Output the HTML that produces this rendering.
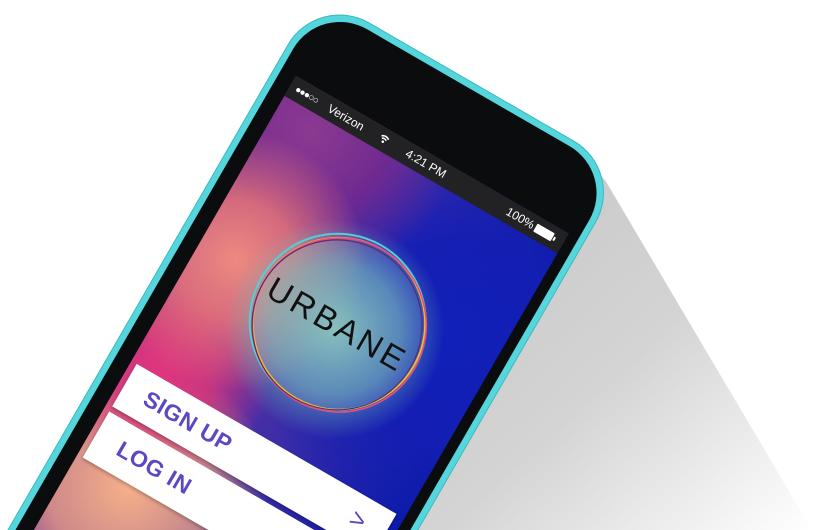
<!DOCTYPE html>
<html><head><meta charset="utf-8"><style>
html,body{margin:0;padding:0;width:818px;height:530px;overflow:hidden;background:#fff;font-family:"Liberation Sans",sans-serif}
#wrap{position:relative;width:818px;height:530px;overflow:hidden}
#shadow{position:absolute;left:0;top:0}
#f{position:absolute;left:296px;top:76px;width:0;height:0;transform:rotate(30deg);transform-origin:0 0}
.abs{position:absolute}
#phone{left:-23px;top:-83px;width:356px;height:640px;border-radius:60px 60px 0 0;background:#55d6dc;box-shadow:inset 0 0 0 1px #3fb8c0}
#bezel{left:-16px;top:-76px;width:342px;height:633px;border-radius:54px 54px 0 0;background:#0b0c0d}
#screen{left:0;top:0;width:315px;height:557px;overflow:hidden;
background:
radial-gradient(circle at 160px 200px,rgba(130,195,185,.95) 0,rgba(110,190,180,.6) 65px,rgba(110,190,180,0) 110px),
radial-gradient(circle at 40px 190px,#ee8a80 0,rgba(235,120,120,.8) 60px,rgba(235,120,120,0) 130px),
radial-gradient(circle at 30px 320px,#e0357f 0,rgba(220,50,120,.8) 50px,rgba(220,50,120,0) 110px),
radial-gradient(circle at 60px 440px,#f6b08a 0,rgba(245,170,130,.7) 80px,rgba(245,170,130,0) 140px),
radial-gradient(circle at 40px 40px,#8a3a90 0,rgba(120,40,140,.8) 80px,rgba(120,40,140,0) 150px),
radial-gradient(circle at 270px 150px,#1020b8 0,rgba(20,30,180,.9) 100px,rgba(20,30,180,0) 200px),
linear-gradient(90deg,#7a3a9a,#3a2ca8 55%,#0a1aa8)}
#sb{left:0;top:0;width:315px;height:23px;background:#222224;color:#fff;font-size:12px;line-height:23px}
#sb span{position:absolute;top:0}
.bar{left:6px;width:300px;background:#fff;color:#5b48c2;font-weight:bold;font-size:23px;letter-spacing:.5px;box-shadow:0 2px 3px rgba(0,0,0,.25)}
</style></head><body><div id="wrap">
<svg id="shadow" width="818" height="530">
<defs><linearGradient id="g" x1="0" y1="0" x2="1" y2="1"><stop offset="0" stop-color="#c4c4c4"/><stop offset=".55" stop-color="#d4d4d4"/><stop offset="1" stop-color="#fff"/></linearGradient></defs>
<polygon points="585,160 605,180 812,530 400,530" fill="url(#g)"/>
</svg>
<div id="f">
<div id="phone" class="abs"></div>
<div id="bezel" class="abs"></div>
<div id="screen" class="abs">
 <div id="sb" class="abs">
  <span style="left:6px;font-size:10px;letter-spacing:-1px">●●●○○</span>
  <span style="left:44px">Verizon</span>
  <span style="left:102px">
   <svg width="12" height="23" viewBox="0 0 12 23"><path d="M2 9a6 6 0 0 1 8 0M3.5 11a4 4 0 0 1 5 0" stroke="#fff" stroke-width="1.6" fill="none"/><circle cx="6" cy="13.5" r="1.3" fill="#fff"/></svg></span>
  <span style="left:134px">4:21 PM</span>
  <span style="left:250px">100%</span>
  <span style="left:283px;top:7px;width:20px;height:9px;background:#fff;border-radius:1px"></span>
  <span style="left:304px;top:10px;width:2px;height:4px;background:#fff"></span>
 </div>
 <svg class="abs" style="left:62px;top:95px" width="196" height="196" viewBox="0 0 196 196">
  <circle cx="98" cy="98" r="86" fill="rgba(255,255,255,.08)"/>
  <circle cx="97" cy="97" r="88" fill="none" stroke="#4fd0dc" stroke-width="2"/>
  <circle cx="99" cy="98" r="86" fill="none" stroke="#f0c020" stroke-width="1.6"/>
  <circle cx="100" cy="99" r="87" fill="none" stroke="#ee4a7a" stroke-width="1.6"/>
  <circle cx="98" cy="100" r="85" fill="none" stroke="#5a2a70" stroke-width="1.2"/>
  <text x="98" y="111" text-anchor="middle" font-family="Liberation Sans,sans-serif" font-size="33" letter-spacing="3" fill="#111">URBANE</text>
 </svg>
 <div class="abs bar" style="top:329px;height:49px;line-height:49px"><span style="margin-left:24px">SIGN UP</span><span style="position:absolute;left:262px;font-weight:normal;font-size:26px">&gt;</span></div>
 <div class="abs bar" style="top:384px;height:53px;line-height:53px"><span style="margin-left:26px">LOG IN</span></div>
</div>
</div>
</div></body></html>
